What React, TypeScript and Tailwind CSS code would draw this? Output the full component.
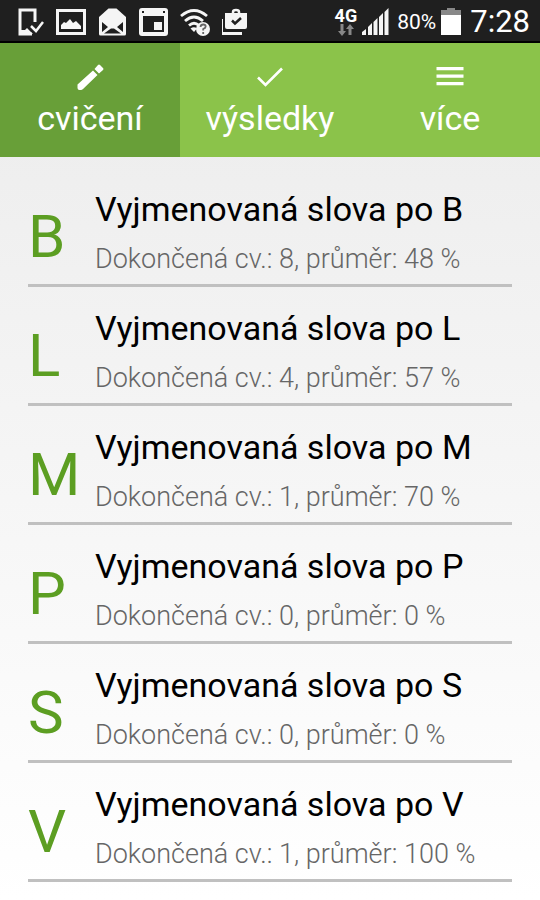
import { useState } from 'react';
import type { ReactNode } from 'react';

const exercises = [
  { letter: 'B', done: 8, average: 48 },
  { letter: 'L', done: 4, average: 57 },
  { letter: 'M', done: 1, average: 70 },
  { letter: 'P', done: 0, average: 0 },
  { letter: 'S', done: 0, average: 0 },
  { letter: 'V', done: 1, average: 100 },
];

const PencilIcon = () => (
  <svg width="28" height="28" viewBox="0 0 28 28" fill="currentColor">
    <path d="M3.500 27Q1.500 27 1.500 25V21.500L17 7.500l4.500 4.500L7 26Q6 27 5 27ZM18.500 6l3.500-4Q23 1 24 2l3 3q1 1 0 2l-4 3.500Z" />
  </svg>
);

const CheckIcon = () => (
  <svg width="28" height="28" viewBox="0 0 28 28" fill="none" stroke="currentColor" strokeWidth="2.600">
    <path d="M2 14.500l7.500 7.500L26 5.500" />
  </svg>
);

const MenuIcon = () => (
  <svg width="28" height="28" viewBox="0 0 28 28" fill="currentColor">
    <path d="M.5 4h27v3.200H.5ZM.5 11.500h27v3.200H.5ZM.5 19h27v3.200H.5Z" />
  </svg>
);

const tabs: { id: string; label: string; icon: ReactNode }[] = [
  { id: 'exercises', label: 'cvičení', icon: <PencilIcon /> },
  { id: 'results', label: 'výsledky', icon: <CheckIcon /> },
  { id: 'more', label: 'více', icon: <MenuIcon /> },
];

function StatusBar() {
  return (
    <div className="flex h-[43px] items-center justify-between border-b-2 border-black bg-[#1f1f1f] pr-[10px] pl-[18px] text-white">
      <div className="flex items-center gap-3 pt-[2px]">
        {/* Phone */}
        <svg width="26" height="28" viewBox="0 0 26 28" fill="none" stroke="#f5f5f5">
          <path d="M17 14V2H2v24h12" strokeWidth="3" />
          <path d="M3 22h4l2-2 6 6H3Z" fill="#f5f5f5" stroke="none" />
          <path d="M13 18l5 5 7-9" strokeWidth="2.500" />
        </svg>
        {/* Picture */}
        <svg width="30" height="28" viewBox="0 0 30 28" fill="none" stroke="#f5f5f5">
          <path d="M1.500 2.500h27v23h-27Z" strokeWidth="3" />
          <path d="M5 21v-4l3-3 2 1 4-4 3 4 3-2 5 5v3Z" fill="#f5f5f5" stroke="none" />
        </svg>
        {/* Mail */}
        <svg width="29" height="28" viewBox="0 0 29 28">
          <path d="M10.500 .5h8L28 9v17q0 1.500-1.500 1.500h-24Q1 27.500 1 26V9Z" fill="#f5f5f5" />
          <path d="M4 14l6 5-6 5ZM25 14l-6 5 6 5ZM6 25.500l7-5h3l7 5Z" fill="#1f1f1f" />
        </svg>
        {/* Calendar */}
        <svg width="29" height="28" viewBox="0 0 29 28">
          <rect x="0" y="0" width="29" height="28" rx="3" fill="#f5f5f5" />
          <path d="M4 8h21v16H4ZM3 3h2v2H3ZM24 3h2v2h-2Z" fill="#1f1f1f" />
          <path d="M15 14h8v8h-8Z" fill="#f5f5f5" />
        </svg>
        {/* Wi-Fi */}
        <svg width="30" height="28" viewBox="0 0 30 28" fill="none" stroke="#f5f5f5" strokeWidth="2.800">
          <path d="M1 8Q14-3 27 8M5 13Q14 5 23 13M9 17.500Q14 13 19 17.500" />
          <path d="M10.500 20.500Q14 18 17 20.500L14 24Z" fill="#f5f5f5" stroke="none" />
          <circle cx="23" cy="21" r="7" fill="#f5f5f5" stroke="none" />
          <path d="M20.500 19q.3-2.500 2.700-2.500t2.500 2q0 1.500-2.500 2.500v1.500M23.200 24v2" stroke="#666" strokeWidth="1.800" />
        </svg>
        {/* Shopping bag */}
        <svg width="28" height="28" viewBox="0 0 28 28">
          <path d="M-.5 11v14.500H20" fill="none" stroke="#f5f5f5" strokeWidth="3" />
          <path d="M3 5h22v14q0 2-2 2H5q-2 0-2-2Z" fill="#f5f5f5" />
          <path d="M11 6V4q0-2 3-2t3 2v2" fill="none" stroke="#f5f5f5" strokeWidth="2.500" />
          <path d="M10 12.500l3 3 6-5.500" fill="none" stroke="#1f1f1f" strokeWidth="2.500" />
        </svg>
      </div>

      <div className="flex items-center pt-[2px]">
        <div className="flex flex-col items-center">
          <span className="text-[18px] leading-4 font-bold">4G</span>
          <svg width="16" height="12" viewBox="0 0 16 12" fill="#888">
            <path d="M2.500 0h3v7H8l-4 5-4-5h2.500ZM10.500 11h3V5H16l-4-5-4 5h2.500Z" />
          </svg>
        </div>
        <svg className="ml-1" width="28" height="28" viewBox="0 0 28 28" fill="#f5f5f5">
          <path d="M1 27v-3l4-3v6ZM7 27v-8l4-4v12ZM12.500 27V14l4-4v17ZM18 27V9l4-4v22ZM23.500 27V4l4-4v27Z" />
        </svg>
        <span className="ml-2 text-[21px] leading-7">80%</span>
        <svg className="ml-1" width="22" height="28" viewBox="0 0 22 28">
          <path d="M7 0h8v2h6v5H1V2h6Z" fill="#888" />
          <path d="M1 7h20v20H1Z" fill="#fff" />
        </svg>
        <span className="ml-2 text-[31px] leading-9">7:28</span>
      </div>
    </div>
  );
}

export default function App() {
  const [activeTab, setActiveTab] = useState('exercises');

  return (
    <div className="min-h-screen bg-linear-to-b from-[#ebebeb] to-white font-['Roboto',sans-serif]">
      <StatusBar />

      {/* Tabs */}
      <nav className="grid grid-cols-3 bg-[#8bc34a]">
        {tabs.map((tab) => (
          <button
            key={tab.id}
            type="button"
            onClick={() => setActiveTab(tab.id)}
            className={`flex h-[114px] flex-col items-center gap-1 pt-5 text-[34px] leading-[46px] text-white ${
              activeTab === tab.id ? 'bg-[#689f38]' : ''
            }`}
          >
            {tab.icon}
            {tab.label}
          </button>
        ))}
      </nav>

      {/* Exercise list */}
      <ul className="px-7 pt-[11px]">
        {exercises.map((item) => (
          <li key={item.letter} className="border-b-3 border-[#c0c0c0]">
            <a href={`#${item.letter}`} className="flex h-[116px] items-end">
              <span className="w-[67px] shrink-0 pb-3 text-[60px] leading-[70px] text-[#5c9e22]">{item.letter}</span>
              <span className="flex flex-col gap-3 pb-[7px]">
                <span className="text-[34px] leading-10 text-black">Vyjmenovaná slova po {item.letter}</span>
                <span className="text-[27px] leading-9 font-light text-[#666]">
                  Dokončená cv.: {item.done}, průměr: {item.average} %
                </span>
              </span>
            </a>
          </li>
        ))}
      </ul>
    </div>
  );
}
